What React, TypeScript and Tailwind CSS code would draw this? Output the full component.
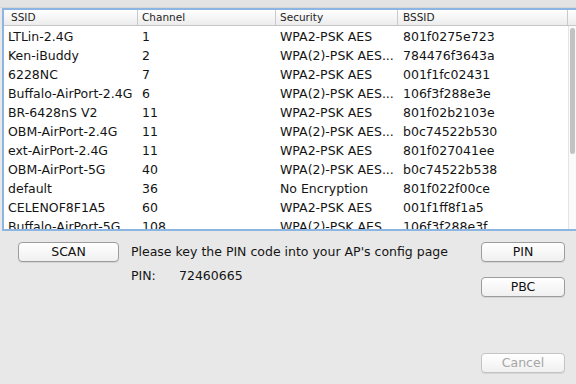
import React from "react";

const rows: [string, string, string, string][] = [
  ["LTLin-2.4G", "1", "WPA2-PSK AES", "801f0275e723"],
  ["Ken-iBuddy", "2", "WPA(2)-PSK AES...", "784476f3643a"],
  ["6228NC", "7", "WPA2-PSK AES", "001f1fc02431"],
  ["Buffalo-AirPort-2.4G", "6", "WPA(2)-PSK AES...", "106f3f288e3e"],
  ["BR-6428nS V2", "11", "WPA2-PSK AES", "801f02b2103e"],
  ["OBM-AirPort-2.4G", "11", "WPA(2)-PSK AES...", "b0c74522b530"],
  ["ext-AirPort-2.4G", "11", "WPA2-PSK AES", "801f027041ee"],
  ["OBM-AirPort-5G", "40", "WPA(2)-PSK AES...", "b0c74522b538"],
  ["default", "36", "No Encryption", "801f022f00ce"],
  ["CELENOF8F1A5", "60", "WPA2-PSK AES", "001f1ff8f1a5"],
  ["Buffalo-AirPort-5G", "108", "WPA(2)-PSK AES...", "106f3f288e3f"],
];

function Btn({ children, disabled }: { children: React.ReactNode; disabled?: boolean }) {
  return (
    <div
      className={
        "h-[20px] rounded-[4px] border flex items-center justify-center text-[12.5px] leading-none bg-gradient-to-b from-[#ffffff] to-[#f0f0f0] shadow-[0_1px_0_rgba(0,0,0,0.08)] " +
        (disabled ? "border-[#c4c4c4] text-[#a6a6a6]" : "border-[#9c9c9c] text-[#111]")
      }
    >
      {children}
    </div>
  );
}

export default function App() {
  return (
    <div
      className="w-[576px] h-[384px] bg-[#e8e8e8] overflow-hidden flex flex-col"
      style={{ fontFamily: '"DejaVu Sans", "Liberation Sans", sans-serif' }}
    >
      <div className="h-[8px] bg-[#e3e3e3] border-b border-[#d6d6d6]" />
      <div className="ml-[2px] h-[223px] border-t-2 border-l-2 border-b-2 border-[#8db5e2] bg-white flex flex-col overflow-hidden">
        <div className="h-[16px] shrink-0 flex border-b border-[#c6c6c6] bg-gradient-to-b from-[#ffffff] to-[#ececec] text-[10.5px] text-[#1e1e1e] leading-[15px]">
          <div className="w-[134px] pl-[7px] border-r border-[#c9c9c9]">SSID</div>
          <div className="w-[138px] pl-[4px] border-r border-[#c9c9c9]">Channel</div>
          <div className="w-[122px] pl-[4px] border-r border-[#c9c9c9]">Security</div>
          <div className="w-[170px] pl-[5px] border-r border-[#c9c9c9]">BSSID</div>
          <div className="flex-1" />
        </div>
        <div className="flex flex-1 overflow-hidden">
          <div className="flex-1 flex flex-col text-[12.5px] text-[#141414] pt-[1px]">
            {rows.map((r, i) => (
              <div key={i} className="h-[19px] shrink-0 flex leading-[19px] whitespace-nowrap">
                <div className="w-[134px] pl-[4px]">{r[0]}</div>
                <div className="w-[138px] pl-[4px]">{r[1]}</div>
                <div className="w-[122px] pl-[4px]">{r[2]}</div>
                <div className="w-[170px] pl-[5px]">{r[3]}</div>
              </div>
            ))}
          </div>
          <div className="w-[8px] shrink-0 bg-[#fafafa] border-l border-[#e4e4e4] pt-[2px] flex justify-center">
            <div className="w-[5px] h-[126px] rounded-[3px] bg-[#c2c2c2]" />
          </div>
        </div>
      </div>
      <div className="flex pt-[11px]">
        <div className="pl-[18px] w-[101px] box-content">
          <Btn>SCAN</Btn>
        </div>
        <div className="ml-[12px] flex-1 flex flex-col text-[12.5px] text-[#141414]">
          <div className="h-[20px] leading-[20px] whitespace-nowrap">Please key the PIN code into your AP's config page</div>
          <div className="mt-[4px] h-[20px] leading-[20px] flex">
            <span className="w-[48px]">PIN:</span>
            <span>72460665</span>
          </div>
        </div>
        <div className="w-[84px] mr-[11px] flex flex-col">
          <Btn>PIN</Btn>
          <div className="h-[15px]" />
          <Btn>PBC</Btn>
          <div className="h-[56px]" />
          <Btn disabled>Cancel</Btn>
        </div>
      </div>
    </div>
  );
}
